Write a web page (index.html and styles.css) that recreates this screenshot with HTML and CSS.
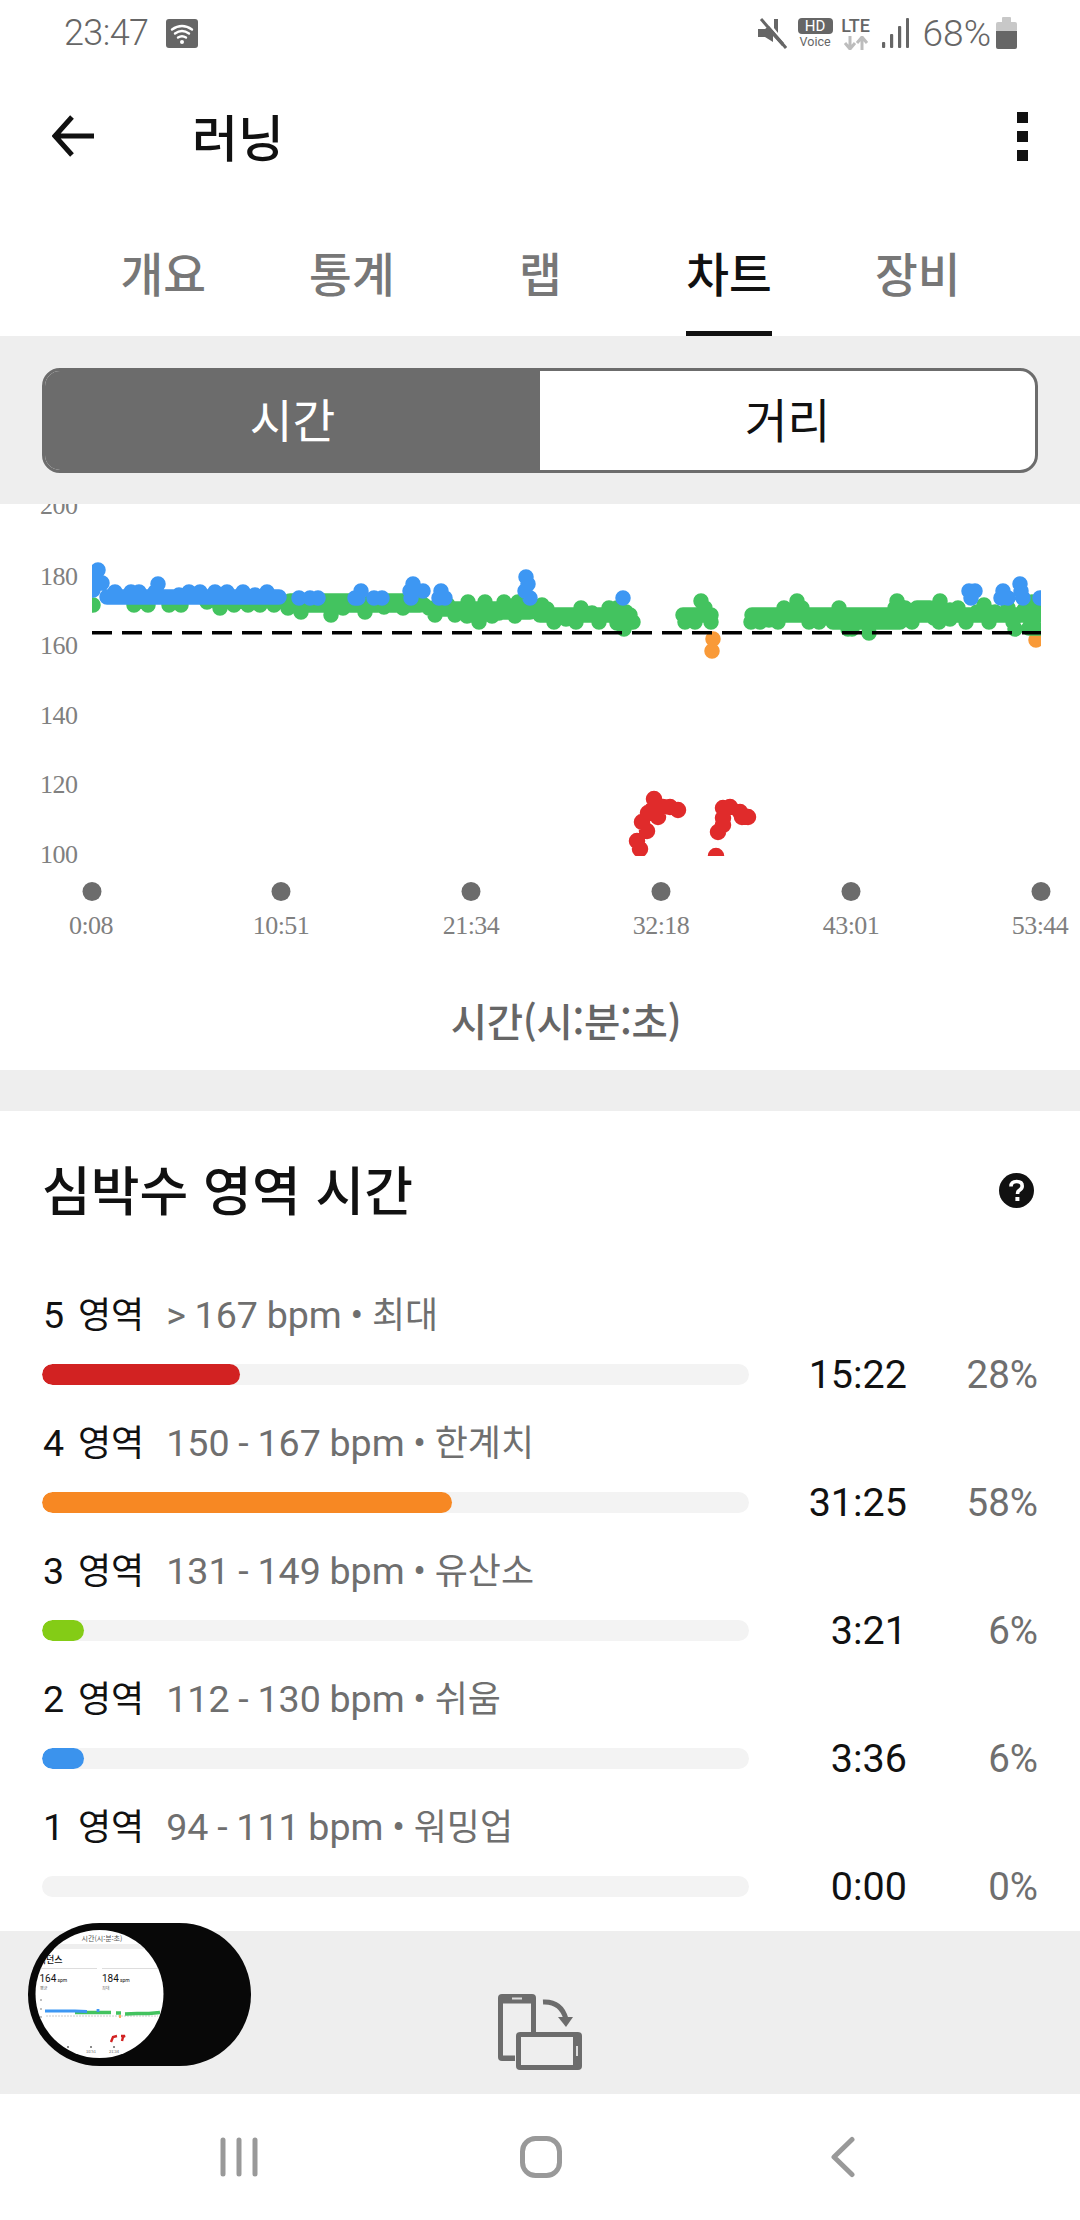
FILE: index.html
```html
<!DOCTYPE html>
<html lang="ko">
<head>
<meta charset="utf-8">
<title>러닝</title>
<link rel="stylesheet" href="styles.css">
</head>
<body>
<div class="screen">
  <div class="status">
    <span class="clock">23:47</span>
    <svg class="wifi" viewBox="0 0 32 29" width="32" height="29">
      <rect width="32" height="29" rx="3" fill="#666"/>
      <g fill="none" stroke="#fff" stroke-width="2.4" stroke-linecap="round">
        <path d="M6 10.5q10-7 20 0"/><path d="M9 14.5q7-5 14 0"/><path d="M12 18.5q4-2.6 8 0"/>
      </g>
      <circle cx="16" cy="23" r="2" fill="#fff"/>
    </svg>
    <div class="status-right">
      <svg class="s-mute" viewBox="0 0 29 31" width="29" height="31">
        <path d="M0 11h7l4-3 15 17-1 2-1 1L15 18v0L15 24 7 19H0z" fill="#666"/>
        <path d="M15 1h4v14l-4-5z" fill="#666" transform="translate(1 0)"/>
        <path d="M3 1l25 29" stroke="#666" stroke-width="3" fill="none"/>
      </svg>
      <div class="s-hd"><span class="hd-box">HD</span><span class="hd-voice">Voice</span></div>
      <div class="s-lte">
        <span class="lte-text">LTE</span>
        <svg viewBox="0 0 26 14" width="26" height="14">
          <path d="M7 0v12M2 7l5 6 5-6" fill="none" stroke="#bdbdbd" stroke-width="3"/>
          <path d="M19 14V2M14 7l5-6 5 6" fill="none" stroke="#bdbdbd" stroke-width="3"/>
        </svg>
      </div>
      <svg class="s-signal" viewBox="0 0 27 30" width="27" height="30">
        <g fill="#666">
          <rect x="0" y="24" width="3.2" height="6" rx="1"/>
          <rect x="8" y="16" width="3.2" height="14" rx="1"/>
          <rect x="16" y="8" width="3.2" height="22" rx="1"/>
          <rect x="24" y="0" width="3" height="30" rx="1"/>
        </g>
      </svg>
      <span class="s-pct">68%</span>
      <svg class="s-batt" viewBox="0 0 21 32" width="21" height="32">
        <rect x="6" y="0" width="9" height="6" rx="1" fill="#c8c8c8"/>
        <rect x="0" y="5" width="21" height="10" rx="2" fill="#c8c8c8"/>
        <path d="M0 14h21v16q0 2-2 2H2q-2 0-2-2z" fill="#666"/>
      </svg>
    </div>
  </div>

  <header class="appbar">
    <svg class="back" viewBox="0 0 44 42" width="44" height="42">
      <path d="M42 21H4M20 2L3 21l17 19" fill="none" stroke="#111" stroke-width="5"/>
    </svg>
    <h1 class="page-title">러닝</h1>
    <div class="more"><i></i><i></i><i></i></div>
  </header>

  <nav class="tabs">
    <div class="tab"><span>개요</span></div>
    <div class="tab"><span>통계</span></div>
    <div class="tab"><span>랩</span></div>
    <div class="tab active"><span>차트</span></div>
    <div class="tab"><span>장비</span></div>
  </nav>

  <div class="segment-band">
    <div class="segment">
      <div class="seg seg-on">시간</div>
      <div class="seg">거리</div>
    </div>
  </div>

  <section class="chart">
    <svg class="plot" viewBox="0 504 1080 490" width="1080" height="490">
      <defs><clipPath id="plotclip"><rect x="92" y="504" width="949" height="352"/></clipPath></defs>
      <g class="axis" text-anchor="end">
        <text x="77.5" y="514">200</text>
        <text x="77.5" y="584.5">180</text>
        <text x="77.5" y="654">160</text>
        <text x="77.5" y="723.5">140</text>
        <text x="77.5" y="793">120</text>
        <text x="77.5" y="862.5">100</text>
      </g>
      <g clip-path="url(#plotclip)" fill="none" stroke-linecap="round" stroke-width="15.5">
        <path stroke="#f99a38" d="M713 639h0M712 651h0M1036 640h0"/>
        <path stroke="#43c35f" d="M93 605h0M134 605h0M148 605h0M169 605h0M181 605h0M207 602h0M220 608h0M234 605h0M248 605h0M260 605h0M274 605h0M288 608h0M301 612h0M293 605h0M320 605h0M331 615h0M327 602h0M336 602h0M343 608h0M365 612h0M355 605h0M384 607h0M375 605h0M394 603h0M403 608h0M411 605h0M424 605h0M435 615h0M429 608h0M455 615h0M448 605h0M467 616h0M468 602h0M479 622h0M485 602h0M482 613h0M492 616h0M504 602h0M499 613h0M515 616h0M518 602h0M513 608h0M535 608h0M290 601H420M300 605H420M440 609H535M460 612H530M542 605h0M547 609h0M554 622h0M540 615H630M566 619h0M576 622h0M581 608h0M590 615h0M599 622h0M592 613h0M609 608h0M617 608h0M626 612h0M617 623h0M624 629h0M633 622h0M623 618h0M683 615H711M685 622h0M695 622h0M692 615h0M701 601h0M705 608h0M711 622h0M752 615H1038M751 622h0M760 622h0M769 620h0M778 622h0M784 608h0M791 612h0M797 601h0M802 608h0M809 622h0M819 622h0M839 608h0M833 622H900M848 629h0M855 623h0M852 629h0M869 633h0M912 622h0M886 622h0M895 608h0M897 601h0M905 608h0M917 608H930M940 601h0M934 618h0M939 622h0M950 619h0M958 608h0M966 622h0M950 610h0M984 605h0M977 612h0M989 622h0M995 612h0M1008 608h0M1015 629h0M1013 622h0M1029 628H1040M1032 602h0M1024 610h0M1036 608h0M1020 615h0"/>
        <path stroke="#3d97f3" d="M98 570h0M102 583h0M93 590h0M93 580h0M107 597H279M115 592h0M131 592h0M139 592h0M158 584h0M155 592h0M179 595h0M189 592h0M200 592h0M215 592h0M227 592h0M243 592h0M255 595h0M267 592h0M299 598h0M310 598h0M318 598h0M355 598h0M361 591h0M358 598h0M374 598h0M382 598h0M413 584h0M410 591h0M411 598h0M423 591h0M441 591h0M439 598h0M445 598h0M526 577h0M528 584h0M525 591h0M530 598h0M623 598h0M969 591h0M975 591h0M971 598h0M1003 591h0M1001 598h0M1008 598h0M1020 584h0M1021 591h0M1023 598h0M1040 598h0"/>
        <path stroke="#e02b2b" stroke-width="16.5" d="M654 799h0M652 810h0M670 807h0M663 807h0M678 810h0M658 817h0M642 822h0M648 813h0M647 831h0M637 841h0M640 849h0M723 808h0M730 807h0M740 812h0M742 817h0M748 817h0M723 818h0M723 825h0M718 832h0M716 856h0"/>
      </g>
      <path d="M92 632.7H1041" stroke="#000" stroke-width="3.4" stroke-dasharray="20 10" fill="none"/>
      <g fill="#6c6c6c">
        <circle cx="92" cy="891.5" r="9.5"/><circle cx="281" cy="891.5" r="9.5"/><circle cx="471" cy="891.5" r="9.5"/><circle cx="661" cy="891.5" r="9.5"/><circle cx="851" cy="891.5" r="9.5"/><circle cx="1041" cy="891.5" r="9.5"/>
      </g>
      <g class="axis" text-anchor="middle">
        <text x="91" y="934">0:08</text>
        <text x="281" y="934">10:51</text>
        <text x="471" y="934">21:34</text>
        <text x="661" y="934">32:18</text>
        <text x="851" y="934">43:01</text>
        <text x="1040" y="934">53:44</text>
      </g>
    </svg>
    <div class="chart-caption">시간(시:분:초)</div>
  </section>

  <div class="gap-band"></div>

  <section class="zones">
    <div class="zones-head">
      <h2 class="zones-title">심박수 영역 시간</h2>
      <svg class="help" viewBox="0 0 35 35" width="35" height="35">
        <circle cx="17.5" cy="17.5" r="17.5" fill="#111"/>
        <path d="M12 13.5q0-5 5.7-5 5.5 0 5.5 4.6 0 2.6-2.6 4-2 1.1-2 3v1" fill="none" stroke="#fff" stroke-width="3.6"/>
        <rect x="16.4" y="24" width="4" height="4" fill="#fff"/>
      </svg>
    </div>
    <div class="zone">
      <div class="zone-label"><span class="zone-name">5 <span class="ko">영역</span></span><span class="zone-range">&gt; 167 bpm • <span class="ko">최대</span></span></div>
      <div class="track"><div class="fill red" style="width:28%"></div></div>
      <div class="zone-time">15:22</div>
      <div class="zone-pct">28%</div>
    </div>
    <div class="zone">
      <div class="zone-label"><span class="zone-name">4 <span class="ko">영역</span></span><span class="zone-range">150 - 167 bpm • <span class="ko">한계치</span></span></div>
      <div class="track"><div class="fill orange" style="width:58%"></div></div>
      <div class="zone-time">31:25</div>
      <div class="zone-pct">58%</div>
    </div>
    <div class="zone">
      <div class="zone-label"><span class="zone-name">3 <span class="ko">영역</span></span><span class="zone-range">131 - 149 bpm • <span class="ko">유산소</span></span></div>
      <div class="track"><div class="fill lime" style="width:6%"></div></div>
      <div class="zone-time">3:21</div>
      <div class="zone-pct">6%</div>
    </div>
    <div class="zone">
      <div class="zone-label"><span class="zone-name">2 <span class="ko">영역</span></span><span class="zone-range">112 - 130 bpm • <span class="ko">쉬움</span></span></div>
      <div class="track"><div class="fill blue" style="width:6%"></div></div>
      <div class="zone-time">3:36</div>
      <div class="zone-pct">6%</div>
    </div>
    <div class="zone">
      <div class="zone-label"><span class="zone-name">1 <span class="ko">영역</span></span><span class="zone-range">94 - 111 bpm • <span class="ko">워밍업</span></span></div>
      <div class="track"></div>
      <div class="zone-time">0:00</div>
      <div class="zone-pct">0%</div>
    </div>
  </section>

  <div class="tray">
    <svg class="thumb" viewBox="28 1923 223 143" width="223" height="143">
      <defs><clipPath id="lens"><ellipse cx="99.5" cy="1994" rx="64" ry="64"/></clipPath></defs>
      <rect x="28" y="1923" width="223" height="143" rx="71.5" fill="#080808"/>
      <ellipse cx="99.5" cy="1994" rx="64" ry="64" fill="#fff"/>
      <g clip-path="url(#lens)">
        <text class="t-cap" x="102" y="1941" text-anchor="middle">시간(시:분:초)</text>
        <rect x="30" y="1944" width="140" height="5" fill="#eee"/>
        <text class="t-head" x="29.5" y="1963">케이던스</text>
        <path d="M38 1968.5h59M102 1968.5h58" stroke="#ddd" stroke-width="1"/>
        <text class="t-num" x="39.5" y="1982">164<tspan class="t-unit" dx="1">spm</tspan></text>
        <text class="t-num" x="102" y="1982">184<tspan class="t-unit" dx="1">spm</tspan></text>
        <text class="t-sub" x="40" y="1990">평균</text>
        <text class="t-sub" x="102" y="1990">최대</text>
        <g fill="#aaa"><circle cx="41" cy="2000" r="1"/><circle cx="41" cy="2009" r="1"/><circle cx="41" cy="2017" r="1"/></g>
        <path d="M46 2016h112" stroke="#ccc" stroke-width="1" stroke-dasharray="2 1"/>
        <path d="M75 2012.5h36M116 2013h5M125 2014l12-.5h12l11-1" stroke="#43c35f" stroke-width="3.6" fill="none"/>
        <path d="M45 2011h30l12 .5M98 2009v3" stroke="#3d97f3" stroke-width="2.8" fill="none"/>
        <path d="M120 2015v3" stroke="#f99a38" stroke-width="1.6"/>
        <path d="M111 2042l2-5 4-1M121 2036l4 0-2 1-1 4" stroke="#d22222" stroke-width="2.4" fill="none"/>
        <g fill="#666"><circle cx="68" cy="2047" r="1"/><circle cx="91" cy="2047" r="1"/><circle cx="114" cy="2047" r="1"/></g>
        <text class="t-sub" x="91" y="2053" text-anchor="middle">10:51</text>
        <text class="t-sub" x="114" y="2053" text-anchor="middle">21:34</text>
      </g>
    </svg>
    <svg class="rotate" viewBox="0 0 84 76" width="84" height="76">
      <rect x="0" y="0" width="38" height="67" rx="4" fill="#6c6c6c"/>
      <rect x="5" y="9.5" width="28" height="52" fill="#eee"/>
      <rect x="14" y="3.5" width="10" height="2" fill="#ddd"/>
      <rect x="17" y="38" width="67" height="38" rx="4" fill="#eee"/>
      <rect x="18" y="38" width="66" height="38" rx="4" fill="#6c6c6c"/>
      <rect x="23" y="43" width="52" height="28" fill="#eee"/>
      <rect x="78" y="52" width="2" height="10" fill="#ddd"/>
      <path d="M45 8q18-1 23 17" fill="none" stroke="#6c6c6c" stroke-width="5"/>
      <path d="M60 23h15l-7 10z" fill="#6c6c6c"/>
    </svg>
  </div>

  <nav class="softkeys">
    <svg viewBox="0 0 38 40" width="38" height="40"><path d="M3 3v34M19 3v34M35 3v34" stroke="#999" stroke-width="5" stroke-linecap="round" fill="none"/></svg>
    <svg viewBox="0 0 42 42" width="42" height="42"><rect x="2.5" y="2.5" width="37" height="37" rx="13" fill="none" stroke="#999" stroke-width="5"/></svg>
    <svg viewBox="0 0 24 42" width="24" height="42"><path d="M21 3.5L3 21l18 17.5" fill="none" stroke="#999" stroke-width="5" stroke-linecap="round" stroke-linejoin="round"/></svg>
  </nav>
</div>
</body>
</html>
```
FILE: styles.css
```css
* { box-sizing: border-box; }
html, body { margin: 0; padding: 0; background: #fff; }
body { font-family: Roboto, "Noto Sans CJK KR", sans-serif; }
.screen { width: 1080px; height: 2220px; overflow: hidden; display: flex; flex-direction: column; background: #fff; }

/* status bar */
.status { height: 66px; flex: none; display: flex; align-items: center; padding: 0 63px 0 64px; color: #666; }
.clock { font-size: 36px; font-weight: 300; letter-spacing: -0.6px; line-height: 1; }
.wifi { margin-left: 18px; }
.status-right { margin-left: auto; display: flex; align-items: center; }
.s-hd { margin-left: 11px; width: 35px; display: flex; flex-direction: column; align-items: center; }
.hd-box { width: 35px; height: 16px; background: #666; color: #fff; border-radius: 4px; font-size: 15px; line-height: 16px; text-align: center; font-weight: 400; }
.hd-voice { font-size: 12.5px; line-height: 14px; margin-top: 1px; }
.s-lte { margin-left: 8px; width: 30px; display: flex; flex-direction: column; align-items: center; }
.lte-text { font-size: 18px; line-height: 17px; font-weight: 500; }
.s-lte svg { margin-top: 2px; }
.s-signal { margin-left: 11px; }
.s-pct { margin-left: 14px; font-size: 37px; font-weight: 300; line-height: 1; letter-spacing: 0; }
.s-batt { margin-left: 5px; }

/* app bar */
.appbar { height: 140px; flex: none; display: flex; align-items: center; padding: 0 52px; position: relative; }
.back { flex: none; }
.page-title { margin: 0 0 2px 96px; font-size: 50px; font-weight: 500; line-height: 60px; color: #111; font-family: "Noto Sans CJK KR", sans-serif; }
.more { margin-left: auto; display: flex; flex-direction: column; gap: 8px; }
.more i { display: block; width: 11px; height: 11px; background: #111; }

/* tabs */
.tabs { height: 130px; flex: none; display: grid; grid-template-columns: repeat(5, 1fr); padding: 0 68px 0 69px; }
.tab { display: flex; justify-content: center; align-items: flex-end; }
.tab span { display: block; font-family: "Noto Sans CJK KR", sans-serif; font-size: 46.5px; font-weight: 500; line-height: 64px; padding-bottom: 27px; color: #777; border-bottom: 5px solid transparent; }
.tab.active span { color: #111; border-bottom-color: #111; }

/* segmented control */
.segment-band { height: 168px; flex: none; background: #eee; padding: 32px 42px 31px 42px; }
.segment { height: 105px; display: flex; border: 3px solid #6c6c6c; border-radius: 18px; background: #fff; overflow: hidden; }
.seg { flex: 1; display: flex; align-items: center; justify-content: center; padding-bottom: 6px; font-family: "Noto Sans CJK KR", sans-serif; font-size: 46.5px; color: #111; }
.seg-on { background: #6c6c6c; color: #fff; }

/* chart */
.chart { height: 566px; flex: none; background: #fff; }
.plot { display: block; }
.axis { font-family: "Liberation Serif", serif; font-size: 26px; letter-spacing: -0.5px; fill: #808080; }
.chart-caption { height: 76px; padding-left: 52px; text-align: center; font-family: "Noto Sans CJK KR", sans-serif; font-size: 39.5px; font-weight: 500; line-height: 52px; color: #666; letter-spacing: -0.3px; }
.gap-band { height: 41px; flex: none; background: #eee; }

/* zones */
.zones { height: 820px; flex: none; padding-bottom: 26px; }
.zones-head { height: 154px; display: flex; align-items: flex-start; padding: 47px 46px 0 42px; }
.zones-title { margin: 0; font-family: "Noto Sans CJK KR", sans-serif; font-size: 53px; font-weight: 500; line-height: 60px; color: #111; }
.help { margin-left: auto; margin-top: 15px; }
.zone { height: 128px; display: grid; grid-template-columns: 707px 158px 131px; grid-template-rows: 46px 21px; row-gap: 29px; padding: 24px 0 8px 42px; }
.zone-label { grid-column: 1 / -1; font-size: 37.6px; line-height: 46px; white-space: nowrap; padding-left: 1px; }
.ko { font-family: "Noto Sans CJK KR", sans-serif; font-size: 36px; }
.zone-name { color: #111; word-spacing: 4.5px; }
.zone-range { color: #6f6f6f; margin-left: 22px; word-spacing: -0.6px; }
.track { grid-column: 1; grid-row: 2; height: 21px; border-radius: 10.5px; background: #f3f3f3; overflow: hidden; }
.fill { height: 21px; border-radius: 10.5px; }
.red { background: #d22222; }
.orange { background: #f78823; }
.lime { background: #84cc16; }
.blue { background: #3b93ed; }
.zone-time, .zone-pct { grid-row: 2; text-align: right; line-height: 21px; align-self: center; }
.zone-time { grid-column: 2; color: #111; font-size: 39.5px; }
.zone-pct { grid-column: 3; color: #6f6f6f; font-size: 38.5px; }

/* tray */
.tray { height: 163px; flex: none; background: #eee; position: relative; display: flex; justify-content: center; padding-top: 63px; }
.thumb { position: absolute; left: 28px; top: -8px; }
.rotate { flex: none; }
.t-cap { font-family: "Noto Sans CJK KR", sans-serif; font-size: 7px; fill: #555; }
.t-head { font-family: "Noto Sans CJK KR", sans-serif; font-size: 9px; font-weight: 500; fill: #111; }
.t-num { font-family: Roboto, sans-serif; font-size: 10px; fill: #111; }
.t-unit { font-size: 5px; }
.t-sub { font-family: "Noto Sans CJK KR", sans-serif; font-size: 4px; fill: #666; }

/* soft keys */
.softkeys { height: 126px; flex: none; display: grid; grid-template-columns: repeat(3, 302px); justify-content: center; justify-items: center; align-items: center; padding: 0 0 0 2px; }
```
